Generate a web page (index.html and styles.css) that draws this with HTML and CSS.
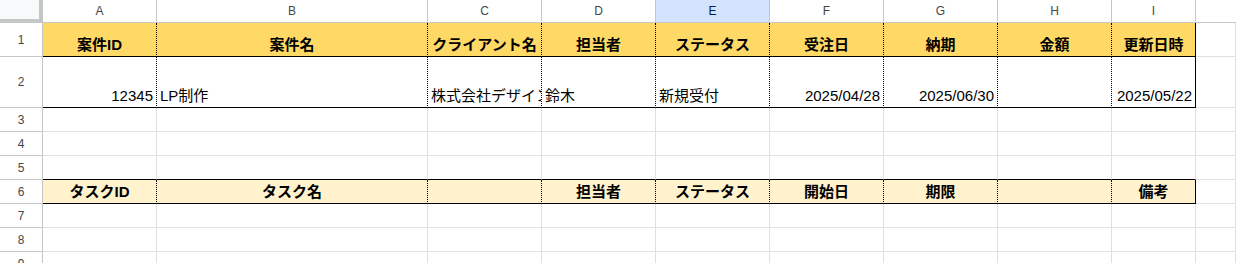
FILE: index.html
```html
<!DOCTYPE html>
<html lang="ja">
<head>
<meta charset="utf-8">
<title>Sheet</title>
<link rel="stylesheet" href="styles.css">
</head>
<body>
<div class="sheet">
  <div class="corner"></div>
  <div class="ch">A</div><div class="ch">B</div><div class="ch">C</div><div class="ch">D</div><div class="ch sel">E</div><div class="ch">F</div><div class="ch">G</div><div class="ch">H</div><div class="ch">I</div><div class="ch last"></div>

  <div class="rh">1</div>
  <div class="c h1 dot bb b">案件ID</div>
  <div class="c h1 dot bb b">案件名</div>
  <div class="c h1 dot bb b">クライアント名</div>
  <div class="c h1 dot bb b">担当者</div>
  <div class="c h1 dot bb b">ステータス</div>
  <div class="c h1 dot bb b">受注日</div>
  <div class="c h1 dot bb b">納期</div>
  <div class="c h1 dot bb b">金額</div>
  <div class="c h1 br bb b">更新日時</div>
  <div class="c"></div>

  <div class="rh">2</div>
  <div class="c dot bb r">12345</div>
  <div class="c dot bb">LP制作</div>
  <div class="c dot bb">株式会社デザイン</div>
  <div class="c dot bb">鈴木</div>
  <div class="c dot bb">新規受付</div>
  <div class="c dot bb r">2025/04/28</div>
  <div class="c dot bb r">2025/06/30</div>
  <div class="c dot bb"></div>
  <div class="c br bb r">2025/05/22</div>
  <div class="c"></div>

  <div class="rh">3</div>
  <div class="c"></div><div class="c"></div><div class="c"></div><div class="c"></div><div class="c"></div><div class="c"></div><div class="c"></div><div class="c"></div><div class="c"></div><div class="c"></div>

  <div class="rh">4</div>
  <div class="c"></div><div class="c"></div><div class="c"></div><div class="c"></div><div class="c"></div><div class="c"></div><div class="c"></div><div class="c"></div><div class="c"></div><div class="c"></div>

  <div class="rh">5</div>
  <div class="c bb"></div><div class="c bb"></div><div class="c bb"></div><div class="c bb"></div><div class="c bb"></div><div class="c bb"></div><div class="c bb"></div><div class="c bb"></div><div class="c bb"></div><div class="c"></div>

  <div class="rh">6</div>
  <div class="c h6 dot bb b">タスクID</div>
  <div class="c h6 dot bb b">タスク名</div>
  <div class="c h6 dot bb b"></div>
  <div class="c h6 dot bb b">担当者</div>
  <div class="c h6 dot bb b">ステータス</div>
  <div class="c h6 dot bb b">開始日</div>
  <div class="c h6 dot bb b">期限</div>
  <div class="c h6 dot bb b"></div>
  <div class="c h6 br bb b">備考</div>
  <div class="c"></div>

  <div class="rh">7</div>
  <div class="c"></div><div class="c"></div><div class="c"></div><div class="c"></div><div class="c"></div><div class="c"></div><div class="c"></div><div class="c"></div><div class="c"></div><div class="c"></div>

  <div class="rh">8</div>
  <div class="c"></div><div class="c"></div><div class="c"></div><div class="c"></div><div class="c"></div><div class="c"></div><div class="c"></div><div class="c"></div><div class="c"></div><div class="c"></div>

  <div class="rh">9</div>
  <div class="c"></div><div class="c"></div><div class="c"></div><div class="c"></div><div class="c"></div><div class="c"></div><div class="c"></div><div class="c"></div><div class="c"></div><div class="c"></div>
</div>
</body>
</html>
```

FILE: styles.css
```css
html, body {
  margin: 0;
  padding: 0;
  background: #ffffff;
  overflow: hidden;
}

.sheet {
  display: grid;
  grid-template-columns: 43px 114px 271px 114px 114px 114px 114px 114px 114px 84px 1fr;
  grid-template-rows: 23px 34px 51px repeat(7, 24px);
  width: 1236px;
  font-family: "Liberation Sans", Arial, "Noto Sans CJK JP", sans-serif;
  font-size: 15px;
  color: #000000;
}

.sheet > div {
  box-sizing: border-box;
  overflow: hidden;
  white-space: nowrap;
}

.corner {
  background: #f8f9fa;
  border-right: 4px solid #c4c7c5;
  border-bottom: 4px solid #c4c7c5;
}

.ch {
  display: flex;
  align-items: center;
  justify-content: center;
  font-family: "Liberation Sans", Arial, sans-serif;
  font-size: 12px;
  color: #444746;
  background: #ffffff;
  border-right: 1px solid #c4c7c5;
  border-bottom: 1px solid #c4c7c5;
}

.ch.sel {
  background: #d3e3fd;
  color: #041e49;
}

.ch.last {
  border-right: none;
}

.rh {
  display: flex;
  align-items: center;
  justify-content: center;
  font-family: "Liberation Sans", Arial, sans-serif;
  font-size: 12px;
  color: #444746;
  background: #ffffff;
  border-right: 1px solid #c4c7c5;
  border-bottom: 1px solid #c4c7c5;
}

.c {
  display: flex;
  align-items: flex-end;
  justify-content: flex-start;
  padding: 0 3px 3px 3px;
  line-height: 17px;
  border-right: 1px solid #e1e1e1;
  border-bottom: 1px solid #e1e1e1;
}

.h1 {
  background: #ffd966;
}

.h6 {
  background: #fff2cc;
}

.dot {
  border-right: 1px dotted #000000;
}

.br {
  border-right: 1px solid #000000;
}

.bb {
  border-bottom: 1px solid #000000;
}

.b {
  font-weight: bold;
  justify-content: center;
}

.r {
  justify-content: flex-end;
}
```
